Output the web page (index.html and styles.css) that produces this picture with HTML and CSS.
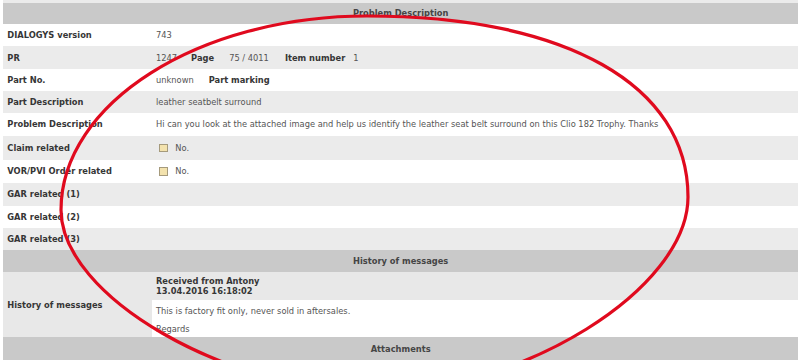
FILE: index.html
```html
<!DOCTYPE html>
<html>
<head>
<meta charset="utf-8">
<link rel="stylesheet" href="styles.css">
</head>
<body>
<div class="page">
  <div class="topband"></div>
  <div class="sheet">
    <div class="hdr h1">Problem Description</div>
    <div class="row r-white"><div class="lbl">DIALOGYS version</div><div class="val">743</div></div>
    <div class="row r-gray r2"><div class="lbl">PR</div><div class="val"><span>1247</span><b class="g14">Page</b><span class="g15">75 / 4011</span><b class="g16">Item number</b><span class="g8">1</span></div></div>
    <div class="row r-white r3"><div class="lbl">Part No.</div><div class="val"><span>unknown</span><b class="g15">Part marking</b></div></div>
    <div class="row r-gray r4"><div class="lbl">Part Description</div><div class="val">leather seatbelt surround</div></div>
    <div class="row r-white r5"><div class="lbl">Problem Description</div><div class="val">Hi can you look at the attached image and help us identify the leather seat belt surround on this Clio 182 Trophy. Thanks</div></div>
    <div class="row r-gray r6"><div class="lbl">Claim related</div><div class="val"><span class="chk"></span><span>No.</span></div></div>
    <div class="row r-white r7"><div class="lbl">VOR/PVI Order related</div><div class="val"><span class="chk"></span><span>No.</span></div></div>
    <div class="row r-gray r8"><div class="lbl">GAR related (1)</div><div class="val"></div></div>
    <div class="row r-white r9"><div class="lbl">GAR related (2)</div><div class="val"></div></div>
    <div class="row r-gray r10"><div class="lbl">GAR related (3)</div><div class="val"></div></div>
    <div class="hdr h2">History of messages</div>
    <div class="msgrow">
      <div class="lbl msglbl">History of messages</div>
      <div class="msg">
        <div class="msghead">Received from Antony<br>13.04.2016 16:18:02</div>
        <div class="msgbody"><p>This is factory fit only, never sold in aftersales.</p><p class="p2">Regards</p></div>
      </div>
    </div>
    <div class="hdr h3">Attachments</div>
  </div>
  <svg class="circle" width="800" height="360" viewBox="0 0 800 360">
    <path d="M367,16 C566,16 688,85 688,197 C688,289 522,392 375,392 C227,392 61,296 61,210 C61,103 199,16 367,16 Z" fill="none" stroke="#e00a1e" stroke-width="3.2"/>
  </svg>
</div>
</body>
</html>
```

FILE: styles.css
```css
html, body {
  margin: 0;
  padding: 0;
  background: #ffffff;
}
.page {
  position: relative;
  width: 800px;
  height: 360px;
  overflow: hidden;
  font-family: "DejaVu Sans", Verdana, sans-serif;
  font-size: 8.3px;
  color: #555555;
}
.topband {
  height: 2.7px;
  margin-left: 3.3px;
  margin-right: 2px;
  background: #ebebeb;
}
.sheet {
  margin-left: 3.3px;
  margin-right: 2px;
}
.hdr {
  display: flex;
  align-items: center;
  justify-content: center;
  background: #c9c9c9;
  color: #454545;
  font-weight: bold;
}
.h1 { height: 21.3px; }
.h2 { height: 22px; }
.h3 { height: 23px; }
.row {
  display: grid;
  grid-template-columns: 148.7px 1fr;
  align-items: center;
  height: 22.5px;
}
.r2 { height: 22.3px; }
.r3 { height: 22px; }
.r4 { height: 22.3px; }
.r5 { height: 22.7px; }
.r6 { height: 24px; }
.r7 { height: 23.3px; }
.r8 { height: 22.7px; }
.r9 { height: 22.3px; }
.r10 { height: 22.4px; }
.r-white { background: #ffffff; }
.r-gray { background: #ebebeb; }
.lbl {
  padding-left: 4px;
  font-weight: bold;
  color: #363636;
  white-space: nowrap;
}
.val {
  display: flex;
  align-items: center;
  padding-left: 4px;
  white-space: nowrap;
}
.val b {
  color: #363636;
}
.g14 { margin-left: 14px; }
.g15 { margin-left: 15px; }
.g16 { margin-left: 16px; }
.g8 { margin-left: 8px; }
.chk {
  width: 6.5px;
  height: 6.5px;
  border: 1px solid #a59a7c;
  background: #f3e2ad;
  margin-left: 3.3px;
  margin-right: 7.5px;
}
.msgrow {
  display: grid;
  grid-template-columns: 148.7px 1fr;
  height: 64.6px;
  background: #e8e8e8;
}
.msglbl {
  display: flex;
  align-items: center;
}
.msg {
  display: flex;
  flex-direction: column;
}
.msghead {
  background: #e8e8e8;
  color: #363636;
  font-weight: bold;
  line-height: 10px;
  padding: 4px 4px 3.3px;
}
.msgbody {
  flex: 1;
  background: #ffffff;
  padding: 6px 4px 0;
  line-height: 10px;
}
.msgbody p {
  margin: 0;
}
.msgbody .p2 {
  margin-top: 8.3px;
}
.circle {
  position: absolute;
  left: 0;
  top: 0;
  pointer-events: none;
}
```
